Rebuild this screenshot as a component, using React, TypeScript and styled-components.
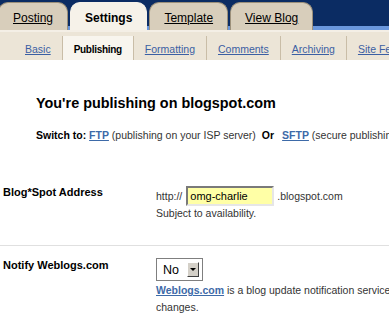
import React from 'react'
import styled, { createGlobalStyle } from 'styled-components'

const GlobalStyle = createGlobalStyle`
    html, body {
        margin: 0;
        padding: 0;
        background: #fff;
        overflow: hidden;
    }
    body {
        font-family: 'Liberation Sans', Arial, sans-serif;
        color: #333;
    }
`

const Page = styled.div`
    width: 640px;
`

const TabBar = styled.nav`
    display: flex;
    align-items: flex-end;
    gap: 2px;
    height: 30px;
    margin-left: -2px;
    background: linear-gradient(to bottom, #0b2c63 0, #0b2c63 26px, #6a97dc 26px);
`

const Tab = styled.a<{ $active?: boolean }>`
    display: flex;
    align-items: center;
    justify-content: center;
    box-sizing: border-box;
    height: 28px;
    padding: 3px 14px 0;
    border: 1px solid ${(p) => (p.$active ? '#f6f2e9' : '#9c907a')};
    border-bottom: none;
    border-radius: 10px 10px 0 0;
    background: ${(p) => (p.$active ? '#f6f2e9' : '#d8cebb')};
    color: #000;
    font-size: 12px;
    font-weight: ${(p) => (p.$active ? 'bold' : 'normal')};
    text-decoration: ${(p) => (p.$active ? 'none' : 'underline')};
    white-space: nowrap;
`

const SubNav = styled.div`
    display: flex;
    box-sizing: border-box;
    height: 30px;
    padding: 4px 0 0 14px;
    border-top: 2px solid #f4efe6;
    background: #ece5d7;
`

const SubItem = styled.a<{ $active?: boolean }>`
    display: flex;
    align-items: center;
    padding: 2px 11px 0;
    border-left: 1px solid #c9bda7;
    background: ${(p) => (p.$active ? '#f8f5ee' : 'transparent')};
    color: ${(p) => (p.$active ? '#000' : '#3b5fa3')};
    font-size: ${(p) => (p.$active ? '10px' : '10.5px')};
    letter-spacing: ${(p) => (p.$active ? '-0.3px' : '0')};
    font-weight: ${(p) => (p.$active ? 'bold' : 'normal')};
    text-decoration: ${(p) => (p.$active ? 'none' : 'underline')};
    white-space: nowrap;

    &:first-child {
        border-left: none;
    }
`

const Content = styled.main`
    padding-top: 35px;
`

const Intro = styled.section`
    padding-left: 36px;
`

const Heading = styled.h2`
    margin: 0;
    color: #000;
    font-size: 14.4px;
    line-height: 17px;
    font-weight: bold;
`

const SwitchLine = styled.p`
    margin: 16px 0 0;
    font-size: 10.5px;
    line-height: 14px;
    white-space: nowrap;
`

const Strong = styled.b`
    color: #000;
`

const Or = styled.b`
    margin: 0 8px 0 6px;
    color: #000;
`

const Link = styled.a`
    color: #3d6aa8;
    font-weight: bold;
    text-decoration: underline;
`

const FormRow = styled.div<{ $top: number }>`
    display: grid;
    grid-template-columns: 153px auto;
    margin-top: ${(p) => p.$top}px;
    padding-left: 3px;
`

const Label = styled.label`
    color: #000;
    font-size: 11px;
    line-height: 14px;
    font-weight: bold;
    white-space: nowrap;
`

const Field = styled.div`
    display: flex;
    flex-direction: column;
    align-items: flex-start;
    font-size: 10.5px;
`

const AddressLine = styled.div`
    display: flex;
    align-items: center;
    margin-top: 1px;
    line-height: 20px;
`

const AddressInput = styled.input`
    box-sizing: border-box;
    width: 88px;
    height: 20px;
    margin: 0 3px 0 4px;
    padding: 0 2px;
    border: 2px solid;
    border-color: #7a7a7a #e6e6e6 #e6e6e6 #7a7a7a;
    background: #ffffa6;
    color: #000;
    font: 11px 'Liberation Sans', Arial, sans-serif;
    outline: none;
`

const Hint = styled.div<{ $lh?: number }>`
    line-height: ${(p) => p.$lh ?? 14}px;
    white-space: nowrap;
`

const Rule = styled.hr`
    margin: 25px 0 0;
    border: none;
    border-top: 1px solid #e0e0e0;
`

const Select = styled.div`
    display: flex;
    align-items: center;
    justify-content: space-between;
    box-sizing: border-box;
    width: 47px;
    height: 23px;
    padding: 0 3px 0 6px;
    border: 1px solid #7f7f7f;
    background: #fff;
    color: #000;
    font-size: 12.5px;
`

const DropButton = styled.span`
    display: flex;
    align-items: center;
    justify-content: center;
    box-sizing: border-box;
    width: 12px;
    height: 15px;
    border: 1px solid;
    border-color: #fff #404040 #404040 #fff;
    background: #d4d0c8;

    &::after {
        content: '';
        border-left: 3px solid transparent;
        border-right: 3px solid transparent;
        border-top: 3px solid #000;
    }
`

const Description = styled.div`
    margin-top: 1px;
`

const tabs = [
    { label: 'Posting' },
    { label: 'Settings', active: true },
    { label: 'Template' },
    { label: 'View Blog' },
]

const subTabs = ['Basic', 'Publishing', 'Formatting', 'Comments', 'Archiving', 'Site Feed']

const App: React.FunctionComponent = () => (
    <Page>
        <GlobalStyle />
        <TabBar>
            {tabs.map((t) => (
                <Tab key={t.label} $active={t.active}>
                    {t.label}
                </Tab>
            ))}
        </TabBar>
        <SubNav>
            {subTabs.map((s) => (
                <SubItem key={s} $active={s === 'Publishing'}>
                    {s}
                </SubItem>
            ))}
        </SubNav>
        <Content>
            <Intro>
                <Heading>You're publishing on blogspot.com</Heading>
                <SwitchLine>
                    <Strong>Switch to:</Strong> <Link>FTP</Link> (publishing on your ISP server)
                    <Or>Or</Or>
                    <Link>SFTP</Link> (secure publishing on your ISP server)
                </SwitchLine>
            </Intro>
            <FormRow $top={43}>
                <Label>Blog*Spot Address</Label>
                <Field>
                    <AddressLine>
                        http://
                        <AddressInput readOnly value="omg-charlie" />
                        .blogspot.com
                    </AddressLine>
                    <Hint>Subject to availability.</Hint>
                </Field>
            </FormRow>
            <Rule />
            <FormRow $top={12}>
                <Label>Notify Weblogs.com</Label>
                <Field>
                    <Select>
                        No
                        <DropButton />
                    </Select>
                    <Description>
                        <Hint $lh={17}>
                            <Link>Weblogs.com</Link> is a blog update notification service that tracks blog
                        </Hint>
                        <Hint $lh={17}>changes.</Hint>
                    </Description>
                </Field>
            </FormRow>
        </Content>
    </Page>
)

export default App
